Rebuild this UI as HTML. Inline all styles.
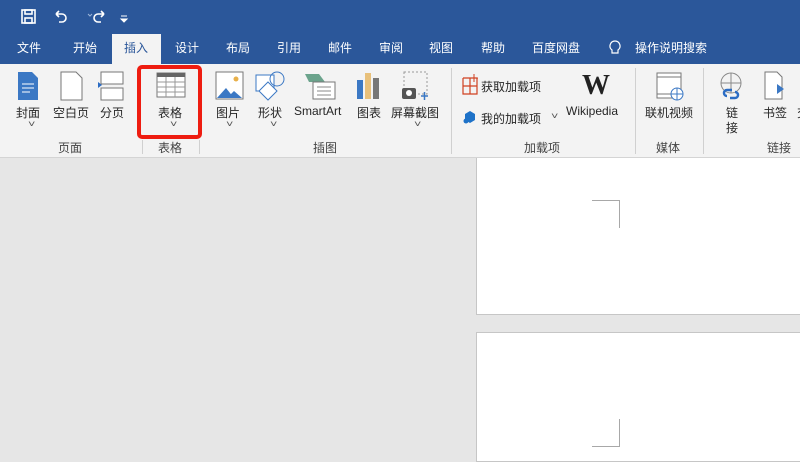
<!DOCTYPE html>
<html><head><meta charset="utf-8"><style>
*{margin:0;padding:0;box-sizing:border-box}
body{width:800px;height:450px;overflow:hidden;background:#e6e6e6;font-family:"Liberation Sans","Noto Sans CJK SC",sans-serif;position:relative}
.a{position:absolute;white-space:nowrap}
.top{left:0;top:0;width:800px;height:64px;background:#2b579a}
.tab{color:#fff;font-size:12px;top:39px}
.rib{left:0;top:64px;width:800px;height:94px;background:#f3f3f3;border-bottom:1px solid #d4d4d4}
.t{font-size:12px;color:#262626}
.g{font-size:12px;color:#444;top:139px}
.sep{width:1px;background:#d0d0d0;top:68px;height:86px}
.v{font-size:9px;color:#555;transform:scaleX(1.4)}
</style></head><body>
<div class="a top"></div>
<!-- QAT -->
<svg class="a" style="left:20px;top:8px" width="120" height="18" viewBox="0 0 120 18">
<g fill="none" stroke="#fff" stroke-width="1.6">
<rect x="2" y="2" width="13" height="13"/><rect x="5" y="2" width="7" height="4"/><rect x="5" y="10" width="7" height="5"/>
<path d="M36 6 h6 a4 4 0 0 1 0 8 h-3 M36 6 l3-3 M36 6 l3 3"/>
<path d="M84 6 h-6 a4 4 0 0 0 0 8 h3 M84 6 l-3-3 M84 6 l-3 3"/>
</g>
<path d="M72 6 l-2 2 l-2-2" stroke="#9fb6d9" fill="none"/>
<path d="M101 11 h6 l-3 3z M101 8 h6" stroke="#fff" fill="#fff"/>
</svg>
<div class="a" style="left:112px;top:34px;width:49px;height:30px;background:#f3f3f3"></div>
<div class="a tab" style="left:17px">文件</div>
<div class="a tab" style="left:73px">开始</div>
<div class="a tab" style="left:124px;color:#2b579a">插入</div>
<div class="a tab" style="left:175px">设计</div>
<div class="a tab" style="left:226px">布局</div>
<div class="a tab" style="left:277px">引用</div>
<div class="a tab" style="left:328px">邮件</div>
<div class="a tab" style="left:379px">审阅</div>
<div class="a tab" style="left:429px">视图</div>
<div class="a tab" style="left:481px">帮助</div>
<div class="a tab" style="left:532px">百度网盘</div>
<svg class="a" style="left:609px;top:40px" width="12" height="16"><path d="M6 1a5 5 0 0 0-3 9v3h6v-3a5 5 0 0 0-3-9z" fill="none" stroke="#fff" stroke-width="1.2"/></svg>
<div class="a tab" style="left:635px">操作说明搜索</div>

<div class="a rib"></div>
<!-- icons -->
<svg class="a" style="left:0;top:64px" width="800" height="70" viewBox="0 64 800 70">
<path d="M18 72h14l6 6v22h-20z" fill="#3b78c4"/><path d="M22 84h12M22 88h12M22 92h8" stroke="#fff"/>
<path d="M61 72h15l6 6v22h-21z" fill="#fff" stroke="#777"/>
<path d="M101 72h22v12h-22zM101 88h22v12h-22z" fill="#fff" stroke="#777"/><path d="M98 82l4 3-4 3z" fill="#2b6cc4"/>
<rect x="157" y="73" width="28" height="24" fill="#fff" stroke="#777"/><rect x="157" y="73" width="28" height="4" fill="#666"/>
<path d="M157 82h28M157 87h28M157 92h28M166 77v20M175 77v20" stroke="#999"/>
<rect x="216" y="72" width="27" height="27" fill="#fff" stroke="#777"/><path d="M217 98l9-10 8 10z" fill="#3b78c4"/><path d="M227 98l7-7 8 7z" fill="#3b78c4"/><circle cx="236" cy="79" r="2.5" fill="#e8b04a"/>
<rect x="256" y="75" width="18" height="16" fill="#fff" stroke="#3b78c4"/><circle cx="277" cy="79" r="7" fill="none" stroke="#3b78c4"/><path d="M268 82l9 9-9 9-9-9z" fill="#fff" stroke="#3b78c4"/>
<path d="M305 74h14l6 8h-16z" fill="#6ba38c"/><rect x="313" y="82" width="22" height="17" fill="#fff" stroke="#777"/><path d="M317 87h14M317 91h14M317 95h14" stroke="#888"/>
<rect x="357" y="80" width="6" height="19" fill="#3b78c4"/><rect x="365" y="73" width="6" height="26" fill="#e8c07a"/><rect x="373" y="78" width="6" height="21" fill="#777"/>
<rect x="404" y="72" width="23" height="22" fill="none" stroke="#999" stroke-dasharray="2 2"/><rect x="402" y="88" width="14" height="11" rx="2" fill="#555"/><circle cx="409" cy="93" r="3" fill="#fff"/><path d="M421 96h7M424.5 92v8" stroke="#3b78c4" stroke-width="1.5"/>
<path d="M463 78h14M463 86h14M463 78v16h14v-16M470 78v16" fill="none" stroke="#d04020" stroke-width="1.2"/><path d="M474 74v8M470 78h8" stroke="#d04020"/>
<path d="M465 114l5-3 5 3v6l-5 3-5-3z" fill="#1e72c8"/><circle cx="466" cy="121" r="2.5" fill="#1e72c8"/>
<path d="M657 73h24v25h-24z" fill="#fff" stroke="#777"/><path d="M657 77h24M657 94h24" stroke="#777"/><circle cx="677" cy="94" r="6" fill="#fff" stroke="#3b78c4"/><path d="M671 94h12M677 88v12" stroke="#3b78c4"/>
<circle cx="731" cy="83" r="10" fill="none" stroke="#888"/><path d="M721 83h20M731 73v20" stroke="#888"/><path d="M727 96a3 3 0 0 1 0-6h5M735 92a3 3 0 0 1 0 6h-5" fill="none" stroke="#2b6cc4" stroke-width="2.5"/>
<path d="M765 72h12l5 5v22h-17z" fill="#fff" stroke="#777"/><path d="M777 84l7 5-7 5z" fill="#3b78c4"/>
</svg>
<div class="a" style="left:582px;top:70px;font-family:'Liberation Serif',serif;font-size:28px;color:#222;font-weight:bold">W</div>
<div class="a t" style="left:16px;top:104px">封面</div>
<div class="a t" style="left:53px;top:104px">空白页</div>
<div class="a t" style="left:100px;top:104px">分页</div>
<div class="a t" style="left:158px;top:104px">表格</div>
<div class="a t" style="left:216px;top:104px">图片</div>
<div class="a t" style="left:258px;top:104px">形状</div>
<div class="a t" style="left:294px;top:104px">SmartArt</div>
<div class="a t" style="left:357px;top:104px">图表</div>
<div class="a t" style="left:391px;top:104px">屏幕截图</div>
<div class="a t" style="left:481px;top:78px">获取加载项</div>
<div class="a t" style="left:481px;top:110px">我的加载项</div>
<div class="a v" style="left:552px;top:111px">˅</div>
<div class="a t" style="left:566px;top:104px">Wikipedia</div>
<div class="a t" style="left:645px;top:104px">联机视频</div>
<div class="a t" style="left:726px;top:104px">链</div>
<div class="a t" style="left:726px;top:119px">接</div>
<div class="a t" style="left:763px;top:104px">书签</div>
<div class="a t" style="left:797px;top:104px">交</div>
<div class="a v" style="left:29px;top:119px">˅</div>
<div class="a v" style="left:171px;top:119px">˅</div>
<div class="a v" style="left:227px;top:119px">˅</div>
<div class="a v" style="left:271px;top:119px">˅</div>
<div class="a v" style="left:415px;top:119px">˅</div>
<div class="a g" style="left:58px">页面</div>
<div class="a g" style="left:158px">表格</div>
<div class="a g" style="left:313px">插图</div>
<div class="a g" style="left:524px">加载项</div>
<div class="a g" style="left:656px">媒体</div>
<div class="a g" style="left:767px">链接</div>
<div class="a sep" style="left:142px;top:140px;height:14px"></div>
<div class="a sep" style="left:199px;top:140px;height:14px"></div>
<div class="a sep" style="left:451px"></div>
<div class="a sep" style="left:635px"></div>
<div class="a sep" style="left:703px"></div>
<div class="a" style="left:137px;top:65px;width:65px;height:74px;border:4px solid #ee1c10;border-radius:5px"></div>
<!-- pages -->
<div class="a" style="left:476px;top:158px;width:330px;height:157px;background:#fff;border:1px solid #c6c6c6;border-top:none"></div>
<div class="a" style="left:476px;top:332px;width:330px;height:130px;background:#fff;border:1px solid #c6c6c6"></div>
<div class="a" style="left:592px;top:200px;width:28px;height:28px;border-top:1px solid #a8a8a8;border-right:1px solid #a8a8a8"></div>
<div class="a" style="left:592px;top:419px;width:28px;height:28px;border-bottom:1px solid #a8a8a8;border-right:1px solid #a8a8a8"></div>
</body></html>
